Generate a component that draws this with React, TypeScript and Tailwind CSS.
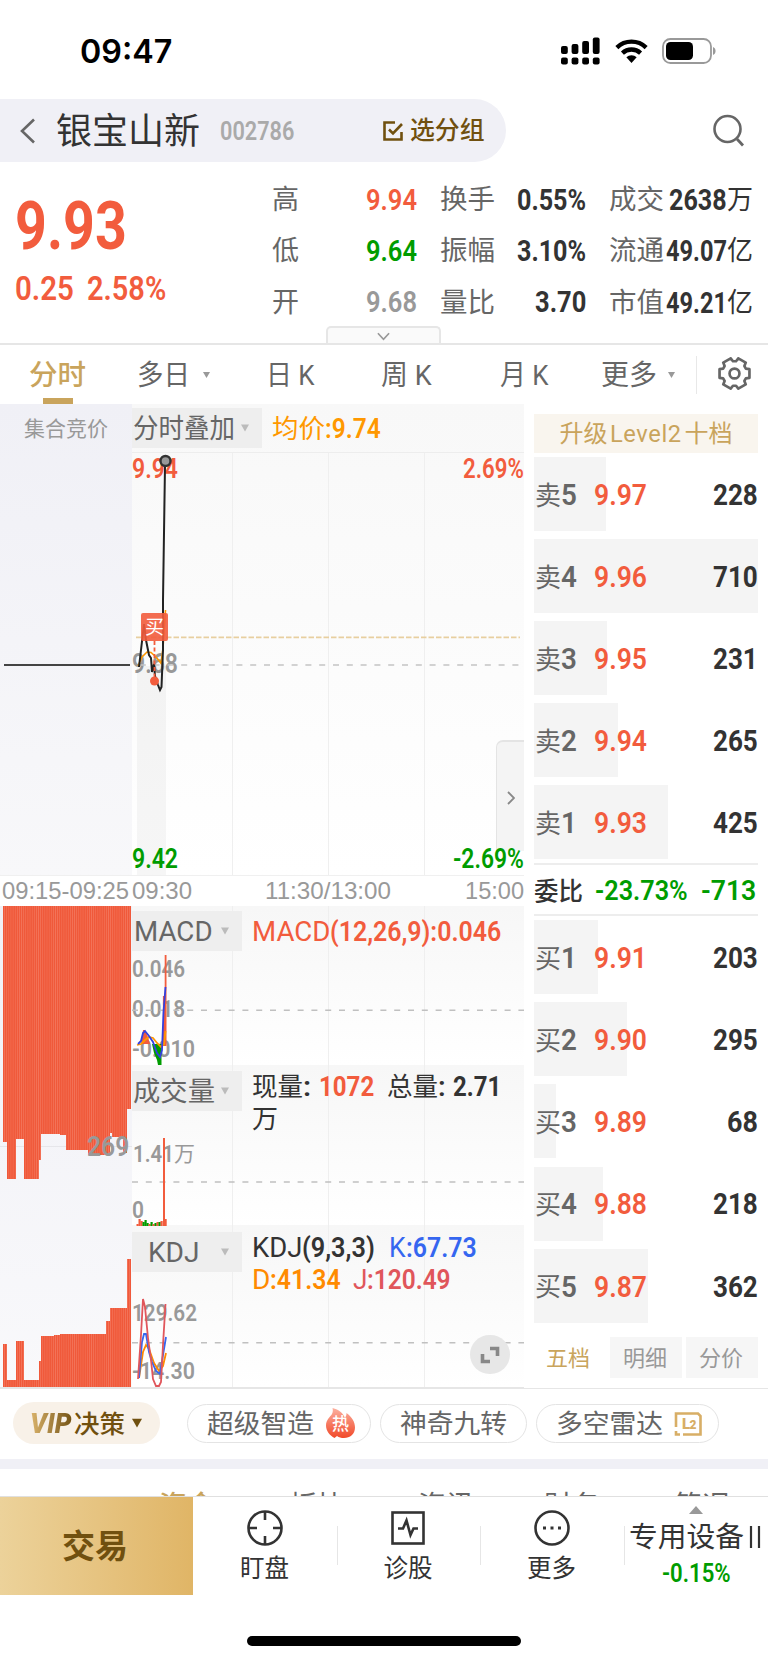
import { useLayoutEffect, useRef, useState } from "react";
import type { ReactNode } from "react";

type Level = { side: string; n: number; price: string; qty: number; bar: number };

const sells: Level[] = [
  { side: "卖", n: 5, price: "9.97", qty: 228, bar: 72 },
  { side: "卖", n: 4, price: "9.96", qty: 710, bar: 224 },
  { side: "卖", n: 3, price: "9.95", qty: 231, bar: 72.5 },
  { side: "卖", n: 2, price: "9.94", qty: 265, bar: 84 },
  { side: "卖", n: 1, price: "9.93", qty: 425, bar: 134 },
];

const buys: Level[] = [
  { side: "买", n: 1, price: "9.91", qty: 203, bar: 64 },
  { side: "买", n: 2, price: "9.90", qty: 295, bar: 93 },
  { side: "买", n: 3, price: "9.89", qty: 68, bar: 21.5 },
  { side: "买", n: 4, price: "9.88", qty: 218, bar: 69 },
  { side: "买", n: 5, price: "9.87", qty: 362, bar: 114 },
];

// auction bars: [x start, x end, y]
const topBars = [
  [3, 7, 1141.7], [7, 15.5, 1179], [15.5, 24, 1139.3], [24, 38.5, 1179], [38.5, 41, 1160],
  [41, 60, 1133.7], [60, 66, 1135], [66, 88, 1150.3], [88, 110, 1155], [110, 112, 1133],
  [112, 123, 1137], [123, 127, 1152.6], [127, 131, 1108.7],
];
const bottomBars = [
  [3, 7, 1343.7], [7, 15.5, 1380], [15.5, 24, 1341.3], [24, 38.5, 1380], [38.5, 41, 1361],
  [41, 53.5, 1335.7], [53.5, 60, 1335], [60, 106, 1334], [106, 110, 1321], [110, 127, 1307.7],
  [127, 131, 1258.7],
];

const volBars: [number, number, string][] = [
  [137, 2, "#f25c3d"], [139, 7, "#f25c3d"], [141, 5, "#f25c3d"], [143, 4, "#009c00"],
  [145, 6, "#009c00"], [147, 3, "#009c00"], [149, 2, "#f25c3d"], [151, 4, "#009c00"],
  [153, 2, "#f25c3d"], [155, 3, "#009c00"], [157, 4, "#f25c3d"], [159, 4, "#009c00"],
  [161, 5, "#f25c3d"], [165, 7, "#f25c3d"],
];

// Condenses its text horizontally to exactly w pixels
function Fit({ w, className = "", inner = "", children }: { w: number; className?: string; inner?: string; children: ReactNode }) {
  const ref = useRef<HTMLSpanElement>(null);
  const [scale, setScale] = useState(1);

  useLayoutEffect(() => {
    if (ref.current && ref.current.offsetWidth) {
      setScale(w / ref.current.offsetWidth);
    }
  }, [w]);

  return (
    <span className={"inline-block shrink-0 " + className} style={{ width: w }}>
      <span
        ref={ref}
        className={"inline-block whitespace-pre origin-left align-top translate-y-[1.3px] " + inner}
        style={{ transform: `scaleX(${scale})` }}
      >
        {children}
      </span>
    </span>
  );
}

function Caret({ className = "" }: { className?: string }) {
  return (
    <svg viewBox="0 0 8 8" className={"shrink-0 " + (className.includes("w-[") ? "" : "w-[8px] h-[8px] ") + className}>
      <path d="M0 0.5h8L4 7.5z" fill="currentColor" />
    </svg>
  );
}

function StatusBar() {
  return (
    <div className="h-[99px] flex items-start shrink-0">
      <Fit w={92} className="ml-[80px] mt-[34px] font-['Inter'] font-semibold text-[33px] text-black">09:47</Fit>
      <svg viewBox="0 0 39 28" className="w-[39px] h-[28px] ml-[389px] mt-[37px]">
        {[0, 1, 2, 3].map((i) => (
          <g key={i}>
            <rect x={i * 10.6} y={[9, 7, 4, 0.5][i]} width="6.8" height={[8, 10, 13, 16.5][i]} rx="2" />
            <rect x={i * 10.6} y="20.5" width="6.8" height="7" rx="2" />
          </g>
        ))}
      </svg>
      <svg viewBox="0 0 32 24" className="w-[33px] h-[25px] ml-[15px] mt-[38.5px]">
        <path d="M1.8 8.2a20.5 20.5 0 0 1 28.4 0" fill="none" stroke="#000" strokeWidth="4.2" />
        <path d="M7.2 13.6a12.8 12.8 0 0 1 17.6 0" fill="none" stroke="#000" strokeWidth="4.2" />
        <path d="M11 17.6a7.4 7.4 0 0 1 10 0L16 23.2z" />
      </svg>
      <svg viewBox="0 0 54 26" className="w-[54px] h-[26px] ml-[14px] mt-[38px]">
        <rect x="1" y="1" width="48" height="24" rx="7.5" fill="none" stroke="#999" strokeWidth="1.8" />
        <rect x="4" y="4" width="27" height="18" rx="4.5" />
        <path d="M51 9c3.4 1.3 3.4 6.7 0 8z" fill="#999" />
      </svg>
    </div>
  );
}

function Header() {
  return (
    <div className="h-[63px] flex items-center shrink-0">
      <div className="w-[506px] h-[63px] bg-[#f0f0f6] rounded-r-full flex items-center">
        <svg viewBox="0 0 16 26" className="w-[16px] h-[26px] ml-[20px]">
          <path d="M14 1.5 2 13l12 11.5" fill="none" stroke="#666" strokeWidth="2.6" />
        </svg>
        <Fit w={144} className="ml-[20px] text-[36px] text-[#333]">银宝山新</Fit>
        <Fit w={74} className="ml-[20px] text-[25.5px] font-semibold text-[#aaa]">002786</Fit>
        <svg viewBox="0 0 22 22" className="w-[22px] h-[22px] ml-[88px]">
          <path d="M13 2.5H2.5v17h17V12" fill="none" stroke="#70500f" strokeWidth="2.6" />
          <path d="M7 9.5l4 4 9-9.5" fill="none" stroke="#70500f" strokeWidth="2.6" />
        </svg>
        <Fit w={75} className="ml-[6px] text-[24.5px] font-medium text-[#70500f]">选分组</Fit>
      </div>
      <svg viewBox="0 0 34 34" className="w-[34px] h-[34px] ml-[206px]">
        <circle cx="15.5" cy="15" r="13" fill="none" stroke="#666" strokeWidth="2.6" />
        <path d="M25 25l6 6.5" stroke="#666" strokeWidth="2.8" />
      </svg>
    </div>
  );
}

const stats = [
  { a: "高", av: "9.94", ac: "text-[#f25c3d]", b: "换手", bv: "0.55%", bw: 69, c: "成交", cv: "2638", cu: "万", cw: 58 },
  { a: "低", av: "9.64", ac: "text-[#009c00]", b: "振幅", bv: "3.10%", bw: 69, c: "流通", cv: "49.07", cu: "亿", cw: 61 },
  { a: "开", av: "9.68", ac: "text-[#999]", b: "量比", bv: "3.70", bw: 51, c: "市值", cv: "49.21", cu: "亿", cw: 61 },
];

function Quote() {
  return (
    <div className="relative h-[183px] flex border-b-2 border-[#e6e6e6] shrink-0">
      <div className="w-[272px] pl-[15px] text-[#f25c3d]">
        <div className="pt-[31px] h-[106px]">
          <Fit w={112} className="text-[66px] font-bold">9.93</Fit>
        </div>
        <div className="flex text-[33px] gap-[13px] mt-[3px] font-semibold">
          <Fit w={59}>0.25</Fit>
          <Fit w={79}>2.58%</Fit>
        </div>
      </div>
      <div className="pt-[12px]">
        {stats.map((s) => (
          <div key={s.a} className="h-[51.3px] flex items-center text-[27px] text-[#666]">
            <Fit w={27} className="mr-[67px]">{s.a}</Fit>
            <Fit w={51} className={"text-[29.5px] font-semibold " + s.ac}>{s.av}</Fit>
            <Fit w={55} className="ml-[23px]">{s.b}</Fit>
            <div className="w-[91px] flex justify-end text-[29.5px] font-bold text-[#333]">
              <Fit w={s.bw}>{s.bv}</Fit>
            </div>
            <Fit w={55} className="ml-[23px]">{s.c}</Fit>
            <div className="w-[89px] flex justify-end items-center text-[#333]">
              <Fit w={s.cw} className="text-[29px] font-bold">{s.cv}</Fit>
              <Fit w={26}>{s.cu}</Fit>
            </div>
          </div>
        ))}
      </div>
      <div className="absolute left-[326px] bottom-0 w-[115px] h-[17px] border-2 border-b-0 border-[#e6e6e6] rounded-t-[5px] bg-[#fafafa] flex justify-center">
        <svg viewBox="0 0 14 9" className="w-[13px] h-[9px] mt-[4px]">
          <path d="M1 1l6 6.5L13 1" fill="none" stroke="#999" strokeWidth="1.8" />
        </svg>
      </div>
    </div>
  );
}

function PeriodTabs() {
  return (
    <div className="h-[59px] flex items-center shrink-0 text-[28px] text-[#666]">
      <div className="relative ml-[29px] w-[58px] h-full flex items-center text-[#c9a45c] font-medium">
        <Fit w={57}>分时</Fit>
        <div className="absolute left-[14px] bottom-0 w-[30px] h-[6px] bg-[#c9a45c]" />
      </div>
      <Fit w={53} className="ml-[50px]">多日</Fit>
      <Caret className="ml-[13px] w-[7px] h-[8px] text-[#999]" />
      <Fit w={49} className="ml-[56px]">日 K</Fit>
      <Fit w={51} className="ml-[66px]">周 K</Fit>
      <Fit w={49} className="ml-[68px]">月 K</Fit>
      <Fit w={56} className="ml-[52px]">更多</Fit>
      <Caret className="ml-[11px] w-[7px] h-[8px] text-[#999]" />
      <div className="w-px h-[38px] bg-[#e8e8e8] ml-[21px]" />
      <svg viewBox="0 0 32 32" className="w-[33px] h-[33px] ml-[21px] mb-[2px]">
        <path
          d="M30.500 11.800v8.400L27 20.700L25.600 23.200L26.900 26.600L19.700 30.700L17.500 27.900H14.500L12.300 30.700L5.100 26.600L6.400 23.200L5 20.700L1.500 20.200V11.800L5 11.300L6.400 8.800L5.100 5.400L12.300 1.300L14.500 4.100H17.500L19.700 1.300L26.900 5.400L25.600 8.800L27 11.300z"
          fill="none" stroke="#666" strokeWidth="2.6" strokeLinejoin="round"
        />
        <circle cx="16" cy="16" r="4.8" fill="none" stroke="#666" strokeWidth="2.6" />
      </svg>
    </div>
  );
}

function Picker({ children, w, tw, pad }: { children: ReactNode; w: string; tw: number; pad: string }) {
  return (
    <div className={"h-[40px] bg-[#eee] flex items-center justify-between pr-[13px] text-[#666] " + w + " " + pad}>
      <Fit w={tw} className="text-[27px]">{children}</Fit>
      <Caret className="text-[#bbb]" />
    </div>
  );
}

function PriceChart() {
  return (
    <div className="relative h-[472px] flex">
      <div className="w-[132px] bg-linear-to-b from-[#f0f0f6] to-[#f8f8fa] pt-[14px] pl-[24px]">
        <Fit w={84} className="text-[21px] text-[#999]">集合竞价</Fit>
      </div>
      <div className="w-[392px] bg-linear-to-b from-[#f8f8f8] to-white">
        <div className="h-[49px] flex items-center border-b border-[#ededed]">
          <Picker w="w-[130px]" tw={102} pad="pl-[1px]">分时叠加</Picker>
          <Fit w={53} className="ml-[10px] text-[26px] text-[#ff9800]">均价</Fit>
          <Fit w={56} className="text-[28px] font-semibold text-[#ff9800]">:9.74</Fit>
        </div>
      </div>
      <Fit w={46} className="absolute left-[132px] top-[51px] text-[27px] font-semibold text-[#f25c3d]">9.94</Fit>
      <Fit w={61} className="absolute left-[463px] top-[51px] text-[27px] font-semibold text-[#f25c3d]">2.69%</Fit>
      <Fit w={46} className="absolute left-[132px] top-[246px] text-[27px] font-semibold text-[#999]">9.68</Fit>
      <svg viewBox="0 404 524 472" className="absolute inset-0 w-[524px] h-[472px]" fill="none">
        <path d="M232.5 453V876M328.5 453V876M424.5 453V876" stroke="#efefef" />
        <path d="M137 666h29V876H137z" fill="#000" fillOpacity="0.035" />
        <path d="M0 875.5H524" stroke="#f0f0f0" />
        <path d="M4 665H130" stroke="#444" strokeWidth="2" />
        <path d="M132 665H524" stroke="#c4c4c4" strokeWidth="1.6" strokeDasharray="6 7.8" strokeDashoffset="6" />
        <path d="M136 637.3H520" stroke="#e8cfa0" strokeWidth="1.8" strokeDasharray="5.5 2" />
        <path d="M138 666L142 657L147 652L151 652.5L156 657L161 663L163 648L165.5 610" stroke="#ff9800" strokeWidth="1.6" />
        <path d="M139 667L141 650L144 624L146 640L149 655L151 658L152 672L154 664L155 676L158 685L160 690L161.5 687L163 650L163 600L165 466" stroke="#222" strokeWidth="2" />
        <path d="M154.5 641V680" stroke="#f25c3d" strokeWidth="1.8" strokeDasharray="4 2.5" />
        <circle cx="154.5" cy="681" r="4.5" fill="#f25c3d" />
        <circle cx="165.5" cy="461" r="5" fill="#999" stroke="#333" strokeWidth="2.4" />
      </svg>
      <div className="absolute left-[141px] top-[209px] w-[27px] h-[28px] rounded-[2px] bg-[#f25c3d]/90 text-white text-[19px] flex items-center justify-center">
        买
      </div>
      <div className="absolute left-[496px] top-[336px] w-[28px] h-[111px] rounded-tl-[7px] border-t-2 border-l border-[#e4e4e4] bg-[#f4f4f4]">
        <svg viewBox="0 0 8 14" className="w-[8px] h-[14px] ml-[10px] mt-[49px]">
          <path d="M1 1l6 6-6 6" fill="none" stroke="#888" strokeWidth="1.8" />
        </svg>
      </div>
      <Fit w={46} className="absolute left-[132px] top-[441px] text-[27px] font-semibold text-[#009c00]">9.42</Fit>
      <Fit w={71} className="absolute left-[453px] top-[441px] text-[27px] font-semibold text-[#009c00]">-2.69%</Fit>
    </div>
  );
}

function TimeAxis() {
  return (
    <div className="h-[30px] flex items-center pb-[2px] font-['Liberation_Sans'] text-[24px] text-[#999]">
      <Fit w={127} className="ml-[2px]">09:15-09:25</Fit>
      <Fit w={60} className="ml-[3px]">09:30</Fit>
      <Fit w={126} className="ml-[73px]">11:30/13:00</Fit>
      <Fit w={59} className="ml-[74px]">15:00</Fit>
    </div>
  );
}

function Indicators() {
  return (
    <div className="relative h-[482px] flex border-b border-[#e6e6e6]">
      <div className="w-[132px] bg-linear-to-b from-[#f0f0f6] to-[#f9f9fb]" />
      <div className="w-[392px]">
        <div className="h-[159px] pt-[5px] bg-linear-to-b from-[#f7f7f7] to-white">
          <div className="relative z-10 flex items-center">
            <Picker w="w-[110px]" tw={79} pad="pl-[2px]">MACD</Picker>
            <Fit w={78} className="ml-[10px] text-[28px] text-[#f25c3d]">MACD</Fit>
            <Fit w={171} className="text-[28px] font-semibold text-[#f25c3d]">(12,26,9):0.046</Fit>
          </div>
        </div>
        <div className="h-[160px] pt-[6px] bg-linear-to-b from-[#f7f7f7] to-white">
          <div className="relative z-10 flex items-start">
            <Picker w="w-[110px]" tw={82} pad="pl-[1px]">成交量</Picker>
            <div className="ml-[10px] text-[#333]">
              <div className="flex items-center h-[30px]">
                <Fit w={51} className="text-[26px]">现量</Fit>
                <Fit w={16} className="text-[28px] font-semibold">: </Fit>
                <Fit w={55} className="text-[28px] font-bold text-[#f25c3d]">1072</Fit>
                <Fit w={51} className="ml-[13px] text-[26px]">总量</Fit>
                <Fit w={15} className="text-[28px] font-semibold">: </Fit>
                <Fit w={48} className="text-[28px] font-bold">2.71</Fit>
              </div>
              <Fit w={26} className="text-[26px] mt-[4px]">万</Fit>
            </div>
          </div>
        </div>
        <div className="h-[162px] pt-[7px] bg-linear-to-b from-[#f7f7f7] to-white">
          <div className="relative z-10 flex items-start">
            <Picker w="w-[110px]" tw={52} pad="pl-[16px]">KDJ</Picker>
            <div className="ml-[10px] -mt-px">
              <div className="flex items-center h-[31px] text-[28px] font-semibold">
                <Fit w={50} className="text-[#333] font-normal">KDJ</Fit>
                <Fit w={73} className="text-[#333]">(9,3,3)</Fit>
                <Fit w={17} className="ml-[14px] text-[#3566f0] font-normal">K</Fit>
                <Fit w={71} className="text-[#3566f0]">:67.73</Fit>
              </div>
              <div className="flex items-center h-[33px] text-[28px] font-semibold">
                <Fit w={18} className="text-[#ff8a00] font-normal">D</Fit>
                <Fit w={71} className="text-[#ff8a00]">:41.34</Fit>
                <Fit w={14} className="ml-[12px] text-[#e0565b] font-normal">J</Fit>
                <Fit w={84} className="text-[#e0565b]">:120.49</Fit>
              </div>
            </div>
          </div>
        </div>
      </div>
      <div className="absolute inset-0 text-[24.5px] text-[#999] font-semibold">
        <Fit w={53} className="absolute left-[132px] top-[50px]">0.046</Fit>
        <Fit w={53} className="absolute left-[132px] top-[90px]">0.018</Fit>
        <Fit w={63} className="absolute left-[132px] top-[130px]">-0.010</Fit>
        <Fit w={41} className="absolute left-[133px] top-[235px]">1.41</Fit>
        <Fit w={21} className="absolute left-[174px] top-[235px] text-[21px] leading-[25px] font-normal">万</Fit>
        <Fit w={12} className="absolute left-[132px] top-[291px]">0</Fit>
        <Fit w={65} className="absolute left-[132px] top-[394px]">129.62</Fit>
        <Fit w={63} className="absolute left-[132px] top-[452px]">-14.30</Fit>
      </div>
      <svg viewBox="0 906 524 482" className="absolute inset-0 w-[524px] h-[482px]" fill="none">
        <defs>
          <pattern id="stripe" width="2.12" height="10" patternUnits="userSpaceOnUse">
            <rect width="2.12" height="10" fill="#f0593a" />
            <rect width="0.7" height="10" fill="#f3745a" />
          </pattern>
        </defs>
        <path d="M232.5 906V1387M328.5 906V1387M424.5 906V1387" stroke="#efefef" />
        <path d="M0 1146.5H132" stroke="#e6e6ea" />
        {topBars.map(([a, b, y]) => (
          <rect key={a} x={a} y="906" width={b - a} height={y - 906} fill="url(#stripe)" shapeRendering="crispEdges" />
        ))}
        {bottomBars.map(([a, b, y]) => (
          <rect key={a} x={a} y={y} width={b - a} height={1387 - y} fill="url(#stripe)" shapeRendering="crispEdges" />
        ))}
        <path
          d="M132 1010.3H524M132 1182H524M132 1342.7H524"
          stroke="#c0c0c0" strokeWidth="1.6" strokeDasharray="6 7.8"
        />
        {/* MACD */}
        <path d="M141 1044L143 1030H145L148 1037L150 1044z" fill="#f25c3d" />
        <path d="M152 1044L154 1053L157 1060L158 1065H161.5V1044z" fill="#009c00" />
        <path d="M163.8 996V1046M165.6 955V1046" stroke="#f25c3d" strokeWidth="1.8" />
        <path d="M137 1045L141 1044L145 1040L149 1037L153 1038L157 1043L161 1047L164 1044L165.5 1031" stroke="#ff9800" strokeWidth="1.8" />
        <path d="M138 1044L141 1041L143 1033L145 1031L149 1036L153 1042L157 1053L160 1057L162 1050L163.5 1012L165.5 987" stroke="#3340e0" strokeWidth="1.8" />
        {/* volume */}
        {volBars.map(([x, h, c]) => (
          <rect key={x} x={x - 0.5} y={1226 - h} width="2.2" height={h} fill={c} />
        ))}
        <path d="M164 1138V1226" stroke="#f25c3d" strokeWidth="2" />
        {/* KDJ */}
        <path d="M139 1378L143 1352L146 1345L149 1349L154 1363L159 1371L163 1366L166 1353" stroke="#ff8a00" strokeWidth="1.8" />
        <path d="M139 1378L142 1342L144 1334L146 1334L149 1352L152 1362L156 1371L160 1374L163 1355L166 1337" stroke="#3566f0" strokeWidth="1.8" />
        <path d="M138 1379L141 1335L143 1299L145 1307L148 1338L151 1360L153 1379L156 1386H159L161 1382L163 1345L165.5 1304" stroke="#e0565b" strokeWidth="1.8" />
      </svg>
      <Fit w={42} className="absolute left-[87px] top-[227px] text-[27px] font-semibold text-[#999]">269</Fit>
      <div className="absolute left-[470px] top-[429px] w-[40px] h-[39px] rounded-full bg-[#e7e7e7]">
        <svg viewBox="0 0 40 40" className="w-[40px] h-[40px]">
          <path d="M20 13.5h7.5V21M20 26.5h-7.5V19" fill="none" stroke="#888" strokeWidth="3.6" />
        </svg>
      </div>
    </div>
  );
}

function BookRow({ level }: { level: Level }) {
  return (
    <div className="relative h-[74px] flex items-center shrink-0">
      <div className="absolute left-0 top-0 h-full bg-[#f4f4f4]" style={{ width: level.bar }} />
      <div className="relative flex items-center w-full text-[29.5px] pt-[1px]">
        <Fit w={26} className="ml-[1px] text-[26px] text-[#666]">{level.side}</Fit>
        <Fit w={16} className="text-[#666] font-semibold">{level.n}</Fit>
        <Fit w={53} className="ml-[17px] text-[#f25c3d] font-semibold">{level.price}</Fit>
        <div className="flex-1 flex justify-end text-[#333] font-bold">
          <Fit w={level.qty > 99 ? 45 : 31}>{level.qty}</Fit>
        </div>
      </div>
    </div>
  );
}

function OrderBook() {
  return (
    <div className="w-[224px] ml-[10px] pt-[10px] flex flex-col">
      <div className="h-[39px] bg-[#f9f5ee] flex items-center justify-center shrink-0">
        <div className="flex text-[24px] text-[#c9a45c] -mt-[2px]">
          <Fit w={48}>升级</Fit>
          <Fit w={72} className="ml-[2px] tracking-wide">Level2</Fit>
          <Fit w={48} className="ml-[3px]">十档</Fit>
        </div>
      </div>
      <div className="flex flex-col gap-[8px] mt-[4px]">
        {sells.map((l) => <BookRow key={l.n} level={l} />)}
      </div>
      <div className="h-[53px] mt-[4px] pt-[2px] border-y-2 border-[#ededed] flex items-center shrink-0">
        <Fit w={49} className="text-[25px] font-medium text-[#333]">委比</Fit>
        <Fit w={93} className="ml-[12px] text-[28.5px] font-semibold text-[#009c00]">-23.73%</Fit>
        <Fit w={55} className="ml-[13px] text-[28.5px] font-semibold text-[#009c00]">-713</Fit>
      </div>
      <div className="flex flex-col gap-[8.2px] mt-[4px]">
        {buys.map((l) => <BookRow key={l.n} level={l} />)}
      </div>
      <div className="flex gap-[4px] mt-[14px] h-[41px] text-[22px] text-[#999]">
        <div className="w-[72px] flex items-center pt-[2px] pl-[12px] text-[#c9a45c]"><Fit w={44}>五档</Fit></div>
        <div className="w-[72px] flex items-center pt-[2px] pl-[13px] bg-[#f6f6f6]"><Fit w={44}>明细</Fit></div>
        <div className="w-[72px] flex items-center pt-[2px] pl-[13px] bg-[#f6f6f6]"><Fit w={44}>分价</Fit></div>
      </div>
    </div>
  );
}

function Chips() {
  const chip = "h-[39px] rounded-full border-[1.5px] border-[#e4e4e4] flex items-center pl-[19px] text-[26.5px] text-[#666] ";
  return (
    <div className="h-[70px] flex pt-[13px] shrink-0">
      <div className="ml-[13px] w-[147px] h-[42px] rounded-full bg-[#f8f1e8] flex items-center">
        <Fit w={44} className="ml-[17px] font-black italic text-[27px]" inner="pr-[3px] text-transparent bg-clip-text bg-linear-to-r from-[#dcb56c] to-[#70500f]">VIP</Fit>
        <Fit w={51} className="text-[25px] font-medium text-[#70500f]">决策</Fit>
        <Caret className="ml-[7px] w-[10px] h-[10px] text-[#70500f]" />
      </div>
      <div className="flex gap-[9px] ml-[27px] mt-[2px]">
        <div className={chip + "w-[184px]"}>
          <Fit w={107}>超级智造</Fit>
          <div className="relative ml-[11px] w-[31px] h-[33px]">
            <svg viewBox="0 0 31 33" className="absolute inset-0 w-[31px] h-[33px]">
              <defs>
                <linearGradient id="flame" x1="0" y1="0" x2="0" y2="1">
                  <stop offset="0" stopColor="#fcb09f" />
                  <stop offset="1" stopColor="#f14a2a" />
                </linearGradient>
              </defs>
              <path d="M7.500 1C14 2.500 18 6 20 11c1-1.500 1.500-3 1.500-5 5.500 4 8.500 9 8.500 14.500C30 27 25 31 19 31c-3 0-5-.500-7-2l-2.500 2C5 28.500 1 24 1 18.500 1 13 5 10 7 7c1-2 1-4 .500-6z" fill="url(#flame)" />
            </svg>
            <span className="absolute left-[7px] top-[9px] text-[17px] font-medium text-white">热</span>
          </div>
        </div>
        <div className={chip + "w-[147px]"}>
          <Fit w={107}>神奇九转</Fit>
        </div>
        <div className={chip + "w-[183px]"}>
          <Fit w={107}>多空雷达</Fit>
          <div className="relative ml-[11px] w-[28px] h-[24px]">
            <svg viewBox="0 0 28 24" className="absolute inset-0 w-[28px] h-[24px]">
              <path d="M2 15V1.5h22l2.5 2.5v18.5H9M2 19v3.5h4" fill="none" stroke="#d8ae66" strokeWidth="2.6" />
            </svg>
            <span className="absolute left-[8px] top-[5px] text-[15px] font-black text-[#d8ae66] tracking-tighter">
              L<span className="text-[12px]">2</span>
            </span>
          </div>
        </div>
      </div>
    </div>
  );
}

function BottomBar() {
  return (
    <div className="h-[99px] flex border-t border-[#e0e0e0] shrink-0 text-[24.5px] text-[#333]">
      <div className="w-[193px] bg-linear-to-r from-[#ecd29a] to-[#e0b566] flex items-center justify-center text-[33px] font-bold text-[#70500f]">
        <Fit w={66} className="-mt-[2px] -ml-[3px]">交易</Fit>
      </div>
      <div className="w-[144px] flex flex-col items-center">
        <svg viewBox="0 0 36 36" className="w-[36px] h-[36px] mt-[13px] -ml-px" fill="none" stroke="#333" strokeWidth="2.6">
          <circle cx="18" cy="18" r="16.5" />
          <path d="M18 1.5V10M18 26v8.5M1.5 18H10M26 18h8.5" />
        </svg>
        <Fit w={49} className="mt-[10px] -ml-px">盯盘</Fit>
      </div>
      <div className="w-px h-[39px] mt-[29px] bg-[#e6e6e6]" />
      <div className="w-[143px] flex flex-col items-center">
        <svg viewBox="0 0 36 36" className="w-[36px] h-[36px] mt-[13px] -ml-[3px]" fill="none" stroke="#333" strokeWidth="2.6">
          <rect x="2.5" y="2.5" width="31" height="31" />
          <path d="M8 18.5h5l3.500-8 4 14.500 3-6.500h4.500" />
        </svg>
        <Fit w={49} className="mt-[10px] -ml-[3px]">诊股</Fit>
      </div>
      <div className="w-px h-[39px] mt-[29px] -ml-px bg-[#e6e6e6]" />
      <div className="w-[143px] flex flex-col items-center">
        <svg viewBox="0 0 36 36" className="w-[36px] h-[36px] mt-[13px] -ml-[2px]" fill="none" stroke="#333" strokeWidth="2.6">
          <circle cx="18" cy="18" r="16.5" />
          <path d="M9 18h3M16.5 18h3M24 18h3" strokeWidth="3" />
        </svg>
        <Fit w={49} className="mt-[10px] -ml-[2px]">更多</Fit>
      </div>
      <div className="w-px h-[39px] mt-[29px] bg-[#e6e6e6]" />
      <div className="w-[143px] flex flex-col">
        <svg viewBox="0 0 14 8" className="w-[14px] h-[8px] mt-[9px] ml-[64px]">
          <path d="M0 8h14L7 0z" fill="#999" />
        </svg>
        <div className="flex items-center mt-[9px] ml-[4px] text-[28px]">
          <Fit w={115}>专用设备</Fit>
          <svg viewBox="0 0 12 22" className="w-[12px] h-[22px] ml-[5px]">
            <path d="M2 0v22M10 0v22" stroke="#333" strokeWidth="2.2" />
          </svg>
        </div>
        <Fit w={69} className="ml-[37px] mt-[8px] text-[26px] font-semibold text-[#009c00]">-0.15%</Fit>
      </div>
    </div>
  );
}

export default function App() {
  return (
    <div className="w-[768px] h-[1663px] bg-white overflow-hidden flex flex-col leading-none font-['Roboto','Noto_Sans_CJK_SC',sans-serif]">
      <StatusBar />
      <Header />
      <Quote />
      <PeriodTabs />
      <div className="h-[985px] flex shrink-0 border-b border-[#e6e6e6]">
        <div className="w-[524px]">
          <PriceChart />
          <TimeAxis />
          <Indicators />
        </div>
        <OrderBook />
      </div>
      <Chips />
      <div className="h-[10px] bg-[#f0f0f6] shrink-0" />
      {/* next section scrolls in under the bottom bar */}
      <div className="h-[27px] overflow-hidden flex shrink-0 pt-[23px] text-[28px] text-[#666]">
        <Fit w={56} className="ml-[159px] text-[#c9a45c] font-medium">资金</Fit>
        <Fit w={56} className="ml-[74px]">板块</Fit>
        <Fit w={56} className="ml-[73px]">资讯</Fit>
        <Fit w={56} className="ml-[70px]">财务</Fit>
        <Fit w={56} className="ml-[74px]">简况</Fit>
      </div>
      <BottomBar />
      <div className="mt-[41px] ml-[247px] w-[274px] h-[10px] rounded-full bg-black shrink-0" />
    </div>
  );
}
